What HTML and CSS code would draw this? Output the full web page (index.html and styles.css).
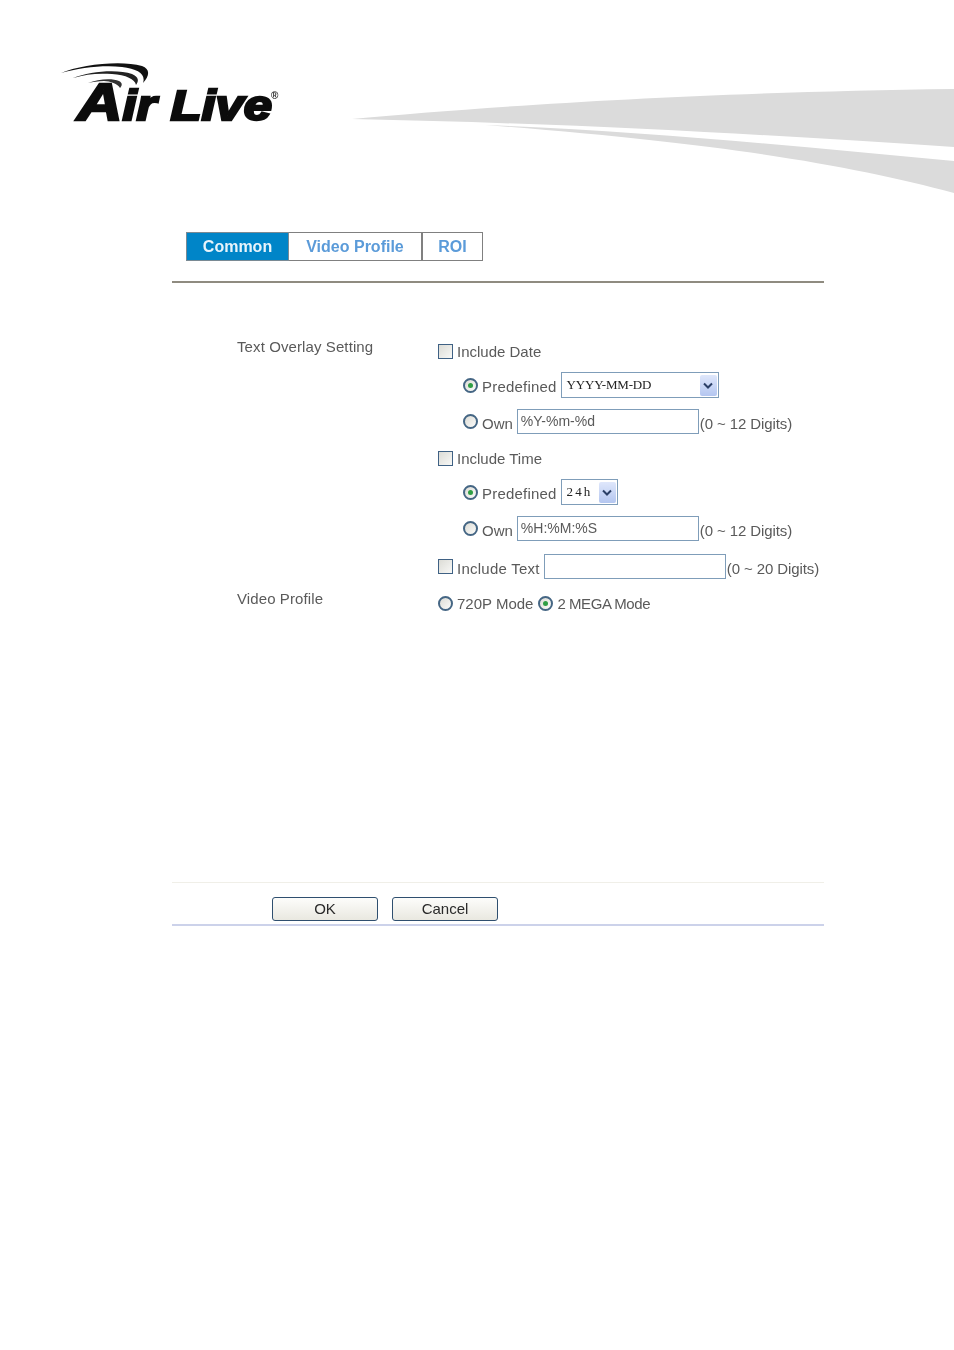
FILE: index.html
```html
<!DOCTYPE html>
<html lang="en">
<head>
<meta charset="utf-8">
<title>Text Overlay Setting</title>
<link rel="stylesheet" href="styles.css">
</head>
<body>
<header class="masthead">
  <svg class="logo" width="222" height="64" viewBox="0 0 222 64" aria-label="Air Live">
    <path d="M1 13 C20 5 60 0 82 6 C90 9 90 15 83 23 C86 14 78 9 62 7 C42 5 20 8 1 13Z" fill="#111"/>
    <path d="M13 18 C30 11 58 9 72 14 C79 17 79 21 76 25 C75 19 66 15 52 14 C38 13 26 14 13 18Z" fill="#222"/>
    <path d="M28 23 C38 19 52 18 59 21 C63 23 62 26 60 28 C58 24 50 21 44 21 C38 21 33 22 28 23Z" fill="#333"/>
    <text class="logo-word" transform="translate(17 60) scale(1.21 1)"><tspan class="logo-cap">A</tspan>ir Live</text>
    <text class="logo-mark" x="211" y="39">®</text>
  </svg>
  <svg class="swoosh" width="604" height="107" viewBox="350 88 604 107" aria-hidden="true">
    <path d="M352 119 C480 107 700 92 954 89 L954 147 C800 137 600 124 352 119Z" fill="#dbdbdb"/>
    <path d="M485 125 C650 131 800 147 954 161 L954 193 C850 165 720 143 485 125Z" fill="#dbdbdb"/>
  </svg>
</header>

<main class="panel">
  <nav class="tabs">
    <a class="tab tab-active">Common</a>
    <a class="tab">Video Profile</a>
    <a class="tab">ROI</a>
  </nav>
  <hr class="rule">

  <section class="settings">
    <div class="group group-overlay">
      <div class="group-label">Text Overlay Setting</div>
      <div class="controls">
        <div class="row row-date"><span class="check"></span><span>Include Date</span></div>
        <div class="row row-sub row-pre"><span class="radio radio-on"></span><span class="lbl lbl-pre">Predefined</span>
          <span class="select select-wide"><span class="select-text">YYYY-MM-DD</span><span class="select-btn"><svg width="10" height="7" viewBox="0 0 10 7"><path d="M1 1.5 L5 5.5 L9 1.5" fill="none" stroke="#2b3f66" stroke-width="2"/></svg></span></span>
        </div>
        <div class="row row-sub row-own"><span class="radio"></span><span class="lbl">Own</span><span class="field">%Y-%m-%d</span><span class="lbl hint">(0 ~ 12 Digits)</span></div>
        <div class="row row-time"><span class="check"></span><span>Include Time</span></div>
        <div class="row row-sub row-pre"><span class="radio radio-on"></span><span class="lbl lbl-pre">Predefined</span>
          <span class="select select-narrow"><span class="select-text">24h</span><span class="select-btn"><svg width="10" height="7" viewBox="0 0 10 7"><path d="M1 1.5 L5 5.5 L9 1.5" fill="none" stroke="#2b3f66" stroke-width="2"/></svg></span></span>
        </div>
        <div class="row row-sub row-own"><span class="radio"></span><span class="lbl">Own</span><span class="field">%H:%M:%S</span><span class="lbl hint">(0 ~ 12 Digits)</span></div>
        <div class="row row-text"><span class="check"></span><span class="lbl lbl-text">Include Text</span><span class="field"></span><span class="lbl hint">(0 ~ 20 Digits)</span></div>
      </div>
    </div>
    <div class="group group-profile">
      <div class="group-label">Video Profile</div>
      <div class="controls">
        <div class="row row-mode"><span class="radio"></span><span>720P Mode</span><span class="radio radio-on radio-second"></span><span class="lbl-mega">2 MEGA Mode</span></div>
      </div>
    </div>
  </section>

  <footer class="actions">
    <button class="btn" type="button">OK</button>
    <button class="btn" type="button">Cancel</button>
  </footer>
</main>
</body>
</html>
```

FILE: styles.css
```css
* { box-sizing: border-box; }
html, body { margin: 0; padding: 0; background: #fff; }
body {
  width: 954px;
  height: 1350px;
  overflow: hidden;
  font-family: "Liberation Sans", Arial, sans-serif;
  color: #5a5a5a;
}
.masthead {
  height: 232px;
  padding: 60px 0 0 60px;
  display: flex;
  align-items: flex-start;
  gap: 68px;
}
.logo { flex: none; overflow: visible; filter: blur(0.3px); }
.logo-word {
  font-family: "Liberation Sans", Arial, sans-serif;
  font-weight: 700;
  font-style: italic;
  font-size: 42px;
  fill: #0c0c0c;
  stroke: #0c0c0c;
  stroke-width: 2.4px;
}
.logo-cap { font-size: 52px; }
.logo-mark { font-size: 10px; font-weight: 700; fill: #222; }
.swoosh { flex: none; margin-top: 28px; }

.panel { width: 652px; margin-left: 172px; }
.tabs { display: flex; padding-left: 14px; height: 29px; filter: blur(0.3px); }
.tab {
  display: flex;
  align-items: center;
  justify-content: center;
  padding-top: 1px;
  border: 1px solid #808080;
  border-left-width: 0;
  font-size: 16px;
  font-weight: 700;
  color: #5b9bd9;
  width: 133px;
}
.tab:nth-child(3) { width: 61px; border-left: 1px solid #808080; }
.tab:nth-child(2) { border-right: 1px solid #808080; }
.tab-active { width: 103px; background: #0085c8; color: #e8f4fb; border: 1px solid #7a8a94; }
.rule {
  margin: 20px 0 0;
  border: 0;
  height: 2px;
  background: #8f8b80;
}
.settings {
  height: 600px;
  padding-top: 49px;
  font-size: 15px;
  border-bottom: 1px solid #f0efe8;
  filter: blur(0.3px);
}
.group { display: grid; grid-template-columns: 266px 1fr; }
.group-label { padding-left: 65px; line-height: 14px; letter-spacing: 0.1px; }
.group-overlay .group-label { padding-top: 8px; }
.group-profile .group-label { padding-top: 1px; }
.controls { display: flex; flex-direction: column; }
.row { display: flex; align-items: center; white-space: nowrap; height: 24px; }
.row-date { margin-top: 7px; }
.row-sub { padding-left: 25px; }
.row-pre { margin-top: 9px; height: 26px; }
.row-own { margin-top: 11px; height: 25px; }
.row-time { margin-top: 12px; }
.row-text { margin-top: 13px; height: 25px; }
.group-profile { margin-top: 12px; }
.lbl { padding-top: 3px; }
.lbl-pre { letter-spacing: 0.2px; }
.lbl-text { letter-spacing: 0.25px; }
.lbl-mega { letter-spacing: -0.45px; }
.check {
  flex: none;
  width: 15px;
  height: 15px;
  margin-right: 4px;
  border: 1.5px solid #3f6184;
  background: linear-gradient(135deg, #dcdcd6, #f8f8f6);
}
.radio {
  flex: none;
  width: 15px;
  height: 15px;
  margin-right: 4px;
  border: 2px solid #456684;
  border-radius: 50%;
  background: linear-gradient(135deg, #dcdcd6, #fbfbf9);
  display: flex;
  align-items: center;
  justify-content: center;
}
.radio-on::after {
  content: "";
  width: 5px;
  height: 5px;
  border-radius: 50%;
  background: #2f9e44;
}
.radio-second { margin-left: 5px; }
.select {
  display: flex;
  align-items: center;
  justify-content: space-between;
  height: 26px;
  margin-left: 4px;
  padding: 0 1px 0 5px;
  border: 1.5px solid #7f9db9;
  background: #fff;
  font-family: "Liberation Serif", serif;
  font-size: 13px;
  color: #222;
}
.select-wide { width: 158px; letter-spacing: -0.2px; }
.select-narrow { width: 57px; letter-spacing: 2.1px; }
.select-btn {
  width: 17px;
  height: 21px;
  display: flex;
  align-items: center;
  justify-content: center;
  border-radius: 2px;
  background: linear-gradient(#dfe7fb, #b4c6f0);
}
.field {
  display: flex;
  align-items: center;
  width: 182px;
  height: 25px;
  padding: 0 0 1px 3px;
  margin-left: 4px;
  border: 1.5px solid #7f9db9;
  background: #fff;
  font-size: 14px;
}
.hint { margin-left: 1px; letter-spacing: -0.1px; }

.actions {
  height: 43px;
  display: flex;
  align-items: flex-start;
  gap: 14px;
  padding: 14px 0 0 100px;
  border-bottom: 2px solid #ccd2ea;
  filter: blur(0.3px);
}
.btn {
  width: 106px;
  height: 24px;
  padding: 0 0 2px;
  border: 1.5px solid #2f4f6f;
  border-radius: 3px;
  background: linear-gradient(#fdfdfb, #e9e8e0);
  font-family: "Liberation Sans", Arial, sans-serif;
  font-size: 15px;
  color: #2a2a2a;
}
```
